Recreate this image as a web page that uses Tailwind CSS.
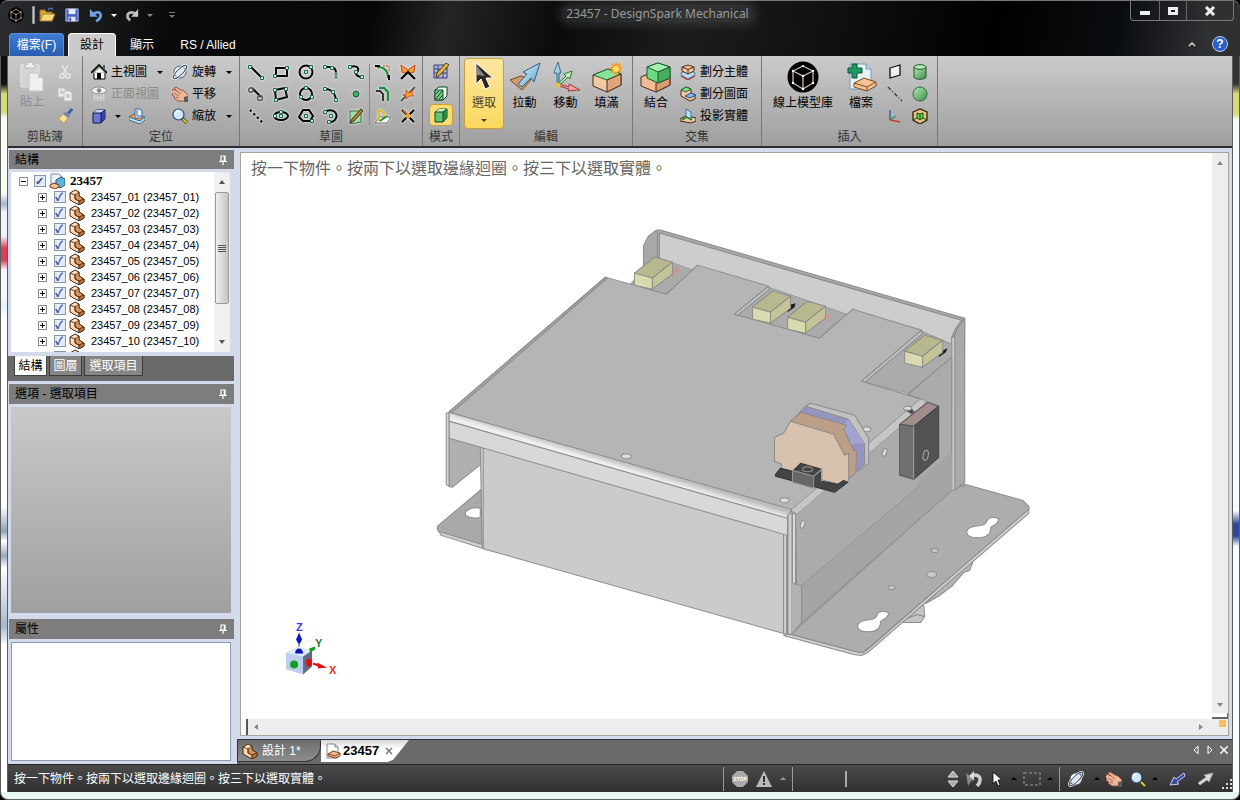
<!DOCTYPE html>
<html lang="zh-Hant">
<head>
    <meta charset="UTF-8">
    <meta name="viewport" content="width=device-width, initial-scale=1.0">
    <title>23457 - DesignSpark Mechanical</title>
    <script src="https://cdn.jsdelivr.net/npm/@tailwindcss/browser@4"></script>
</head>
<body class="h-screen overflow-hidden bg-black font-['Liberation_Sans','Noto_Sans_CJK_TC',sans-serif] text-xs leading-4 text-black">

    <!-- Icon library -->
    <svg class="absolute size-0">
        <defs>
            <linearGradient id="gGreen" x2="1" y2="1"><stop stop-color="#b5e8b5"/><stop offset="1" stop-color="#3c8f4c"/></linearGradient>
            <linearGradient id="gBlue" x2="1" y2="1"><stop stop-color="#e8f6ff"/><stop offset="1" stop-color="#4f9fc8"/></linearGradient>
            <linearGradient id="gBend" gradientUnits="userSpaceOnUse" x1="620" y1="457" x2="617" y2="467"><stop stop-color="#b4b4b4"/><stop offset=".4" stop-color="#c0c0c0"/><stop offset="1" stop-color="#efefef"/></linearGradient>
        </defs>
        <symbol id="i-logo" viewBox="0 0 32 32">
            <circle cx="16" cy="16" r="15.500" fill="#000"/>
            <path d="M16 5l10 5v12l-10 6-10-6V10zM6 10l10 5 10-5M16 15v13" fill="none" stroke="#d8c4b8" stroke-width="1.200"/>
            <g fill="#fff"><circle cx="16" cy="5" r="1"/><circle cx="26" cy="10" r="1.200"/><circle cx="6" cy="10" r="1.200"/><circle cx="16" cy="15" r="1.200"/><circle cx="26" cy="22" r="1.200"/><circle cx="6" cy="22" r="1.200"/><circle cx="16" cy="28" r="1.200"/></g>
        </symbol>
        <symbol id="i-open" viewBox="0 0 16 16">
            <path d="M1 14V3h5l1 2h6v3" fill="#d9a93a" stroke="#8f6a1c"/><path d="M1 14l3-7h12l-3 7z" fill="#f6d77c" stroke="#a87d25"/><path d="M9 3c2-3 4-2 5 0" fill="none" stroke="#4779b0" stroke-width="1.400"/>
        </symbol>
        <symbol id="i-save" viewBox="0 0 16 16">
            <path d="M1 1h14v14H1z" fill="#4a63c8" stroke="#c0c8f0"/><path d="M4 1h8v6H4z" fill="#e8ecff"/><path d="M4 10h8v5H4z" fill="#dfe4f8"/><path d="M5 11h2v4H5z" fill="#3348a8"/>
        </symbol>
        <symbol id="i-undo" viewBox="0 0 16 16">
            <path d="M8 15c7-3 7-11 1-10-2 0-3 1-5 3" fill="none" stroke="#6ea4e4" stroke-width="3"/><path d="M1 1v9h9z" fill="#6ea4e4"/>
        </symbol>
        <symbol id="i-redo" viewBox="0 0 16 16">
            <path d="M6 14C1 11 2 5 8 5c2 0 3 1 4 2" fill="none" stroke="#b8b8b8" stroke-width="3"/><path d="M15 1v9H7z" fill="#c8c8c8"/>
        </symbol>
        <symbol id="i-paste" viewBox="0 0 26 32">
            <path d="M2 4h18v22H2z" fill="#d4d4d4" stroke="#e6e6e6"/><path d="M6 7V4h2a3 3 0 0 1 6 0h2v3z" fill="#f0f0f0" stroke="#bbb"/><path d="M10 12h9l5 5v13H10z" fill="#f0f0f0" stroke="#c4c4c4"/><path d="M19 12v5h5" fill="#c8c8c8"/>
        </symbol>
        <symbol id="i-cut" viewBox="0 0 16 16">
            <path d="M5 1l5 9M11 1L6 10" stroke="#e6e6e6" stroke-width="1.500"/><g fill="none" stroke="#e6e6e6" stroke-width="1.500"><circle cx="5" cy="12" r="2.200"/><circle cx="11" cy="12" r="2.200"/></g>
        </symbol>
        <symbol id="i-copy" viewBox="0 0 16 16">
            <g fill="#efefef" stroke="#bdbdbd"><path d="M1 2h6l2 2v7H1z"/><path d="M7 5h6l2 2v8H7z"/></g><path d="M9 9h4M9 11h4M3 5h3M3 7h3" stroke="#aaa"/>
        </symbol>
        <symbol id="i-brush" viewBox="0 0 16 16">
            <path d="M11 6l4-5" stroke="#4a5fae" stroke-width="3"/><path d="M8 4l5 4-2 2-5-4z" fill="#7383c0"/><path d="M6 6l5 4-4 5-6-5c2 0 4-2 5-4z" fill="#f8e29a" stroke="#c0a450"/>
        </symbol>
        <symbol id="i-home" viewBox="0 0 16 16">
            <path d="M3 8v7h11V8" fill="#fff" stroke="#000"/><path d="M0 9l8-8 8 8" fill="#7fa07f" stroke="#000" stroke-width="1.600"/><path d="M3.500 8.500L8.500 4l5 4.500z" fill="#fff"/><path d="M6 9h4v6H6z"/><path d="M12 1v4l2 2V1z" fill="#557"/>
        </symbol>
        <symbol id="i-front" viewBox="0 0 16 16">
            <path d="M2 7h12v8H2zM2 10h12M2 13h12M5 7v8M8 7v8M11 7v8" fill="#e6e6e6" stroke="#b4b4b4"/><ellipse cx="8" cy="4.500" rx="7.500" ry="3.500" fill="#f0f0f0" stroke="#888"/><circle cx="8" cy="4.500" r="2.200" fill="#888"/>
        </symbol>
        <symbol id="i-cube" viewBox="0 0 16 16">
            <path d="M2 5l4-3h8v9l-4 4H2z" fill="#6c78d8" stroke="#101848"/><path d="M2 5l4-3h8l-4 3z" fill="#cdd6ff"/><path d="M10 5l4-3v9l-4 4z" fill="#3a44a0"/><path d="M2 5h8l4-3M10 5v10" fill="none" stroke="#101848"/>
        </symbol>
        <symbol id="i-plan" viewBox="0 0 16 16">
            <path d="M0 9l5-3 11 3-5 5z" fill="#eda35c" stroke="#8a5a30"/><path d="M0 9v3l11 4 5-4V9l-5 4z" fill="#bfe4f8" stroke="#3d6c8a"/><path d="M6 1h5l2 2v7H6z" fill="#e9f2ff" stroke="#3468a8"/><path d="M8 2v6h5" fill="none" stroke="#3468a8"/>
        </symbol>
        <symbol id="i-spin" viewBox="0 0 16 16">
            <circle cx="8" cy="8" r="6" fill="#dde4ea" stroke="#4c5a68"/><path d="M4 7a4 4 0 0 1 4-3" stroke="#fff" stroke-width="2" fill="none"/><ellipse cx="8" cy="8" rx="9" ry="2.800" transform="rotate(-45 8 8)" fill="none" stroke="#fff" stroke-width="2.400"/><ellipse cx="8" cy="8" rx="9" ry="2.800" transform="rotate(-45 8 8)" fill="none" stroke="#2d4266"/>
        </symbol>
        <symbol id="i-hand" viewBox="0 0 16 16">
            <path d="M0 5l1-2 4 2-3-3 2-1 5 3 3 1 4 4v6l-4 0-6 0-4-3 1-1-3-2 1-1-2-2z" fill="#eeb698" stroke="#8d5440" stroke-width=".9"/><path d="M5 5l4 3M2 7l5 3M4 11l3 1" stroke="#9d6450" stroke-width=".9"/><path d="M12 11l4-1v6h-4z" fill="#5c5c5c"/>
        </symbol>
        <symbol id="i-zoom" viewBox="0 0 16 16">
            <path d="M10 10l5 5" stroke="#3c3c20" stroke-width="3.500"/><path d="M11 11l4 4" stroke="#d9c936" stroke-width="2"/><circle cx="6.500" cy="6.500" r="5.500" fill="#cfe6fb" stroke="#34466a" stroke-width="1.200"/><path d="M3.500 6a3 3 0 0 1 3-3" stroke="#fff" stroke-width="1.500" fill="none"/>
        </symbol>

        <!-- Sketch tools -->
        <symbol id="i-node" viewBox="0 0 4 4"><path d="M.5.5h3v3h-3z" fill="#cfeedd" stroke="#17684a"/></symbol>
        <symbol id="k-line" viewBox="0 0 16 16"><path d="M3 3l10 10" stroke="#000" stroke-width="2"/><use href="#i-node" width="4" height="4" x="0" y="1"/><use href="#i-node" width="4" height="4" x="12" y="12"/></symbol>
        <symbol id="k-rect" viewBox="0 0 16 16"><path d="M3 4h11v8H3z" fill="none" stroke="#000" stroke-width="2"/><use href="#i-node" width="4" height="4" x="0" y="10"/><use href="#i-node" width="4" height="4" x="12" y="2"/></symbol>
        <symbol id="k-circle" viewBox="0 0 16 16"><circle cx="8" cy="8" r="6.500" fill="none" stroke="#000" stroke-width="2"/><use href="#i-node" width="4" height="4" x="6" y="6"/><use href="#i-node" width="4" height="4" x="11" y="1"/></symbol>
        <symbol id="k-arc" viewBox="0 0 16 16"><path d="M2 3h5c5 0 6 3 6 6" fill="none" stroke="#000" stroke-width="2"/><path d="M13 8v7" stroke="#6b8f7c" stroke-width="3"/><use href="#i-node" width="4" height="4" x="0" y="1"/><use href="#i-node" width="4" height="4" x="7" y="2"/></symbol>
        <symbol id="k-spline" viewBox="0 0 16 16"><path d="M2 3c9-3 9 3 7 5s0 5 5 5" fill="none" stroke="#000" stroke-width="2"/><use href="#i-node" width="4" height="4" x="0" y="1"/><use href="#i-node" width="4" height="4" x="6" y="6"/><use href="#i-node" width="4" height="4" x="12" y="11"/></symbol>
        <symbol id="k-tan" viewBox="0 0 16 16"><path d="M4 2l9 9" stroke="#000" stroke-width="2"/><g fill="none" stroke="#555" stroke-width="1.500"><circle cx="3" cy="4" r="2.200"/><circle cx="12" cy="12" r="2.500"/></g></symbol>
        <symbol id="k-rect3" viewBox="0 0 16 16"><path d="M2 4l10-2 2 9-11 3z" fill="none" stroke="#000" stroke-width="2"/><use href="#i-node" width="4" height="4" x="0" y="2"/><use href="#i-node" width="4" height="4" x="11" y="1"/><use href="#i-node" width="4" height="4" x="1" y="12"/></symbol>
        <symbol id="k-circle3" viewBox="0 0 16 16"><circle cx="8" cy="8" r="6" fill="none" stroke="#000" stroke-width="2"/><use href="#i-node" width="4" height="4" x="6" y="0"/><use href="#i-node" width="4" height="4" x="1" y="9"/><use href="#i-node" width="4" height="4" x="12" y="9"/></symbol>
        <symbol id="k-arc3" viewBox="0 0 16 16"><path d="M2 3c6 0 10 4 11 10" fill="none" stroke="#000" stroke-width="2"/><use href="#i-node" width="4" height="4" x="0" y="1"/><use href="#i-node" width="4" height="4" x="8" y="4"/><use href="#i-node" width="4" height="4" x="11" y="12"/></symbol>
        <symbol id="k-point" viewBox="0 0 16 16"><circle cx="8" cy="8" r="3" fill="#3fae6a" stroke="#14532d"/></symbol>
        <symbol id="k-dots" viewBox="0 0 16 16"><path d="M2 2l13 13" stroke="#000" stroke-width="2.200" stroke-dasharray="2 3"/></symbol>
        <symbol id="k-ellipse" viewBox="0 0 16 16"><ellipse cx="8" cy="8" rx="7" ry="4" fill="none" stroke="#000" stroke-width="2"/><use href="#i-node" width="4" height="4" x="0" y="6"/><use href="#i-node" width="4" height="4" x="6" y="6"/><use href="#i-node" width="4" height="4" x="6" y="2"/></symbol>
        <symbol id="k-poly" viewBox="0 0 16 16"><path d="M5 2h6l4 6-3 5H5L1 9z" fill="none" stroke="#000" stroke-width="2"/><use href="#i-node" width="4" height="4" x="6" y="6"/><use href="#i-node" width="4" height="4" x="12" y="11"/></symbol>
        <symbol id="k-sweep" viewBox="0 0 16 16"><path d="M3 3c8-3 12 3 10 7-1 3-4 4-6 4" fill="none" stroke="#000" stroke-width="2"/><use href="#i-node" width="4" height="4" x="0" y="2"/><use href="#i-node" width="4" height="4" x="6" y="6"/><use href="#i-node" width="4" height="4" x="4" y="12"/></symbol>
        <symbol id="k-edit" viewBox="0 0 16 16"><path d="M2 3h11v11l-11 2z" fill="#a7dba7" stroke="#2e7038"/><path d="M2 15l2-4 9-10 2 2-9 10z" fill="#b08a3a" stroke="#3d2c0c"/></symbol>
        <symbol id="k-fillet" viewBox="0 0 16 16"><path d="M2 3c8 0 11 4 11 11" fill="none" stroke="#1d8f3c" stroke-width="2.200"/><path d="M0 2h5M14 11v5" stroke="#000" stroke-width="2"/><path d="M8 2h6v5" fill="none" stroke="#c84b2c" stroke-dasharray="2 1"/></symbol>
        <symbol id="k-offset" viewBox="0 0 16 16"><path d="M4 2h5l4 4v9" fill="none" stroke="#1d8f3c" stroke-width="2.400"/><path d="M1 5h4l3 3v7" fill="none" stroke="#000" stroke-width="1.500"/></symbol>
        <symbol id="k-project" viewBox="0 0 16 16"><path d="M0 15l5-6h11l-4 6z" fill="#fff" stroke="#666"/><path d="M4 1v12M4 2l5 3v6" fill="none" stroke="#e0bb2c" stroke-width="2"/><path d="M5 13l7-5" stroke="#1d8f3c" stroke-width="2"/></symbol>
        <symbol id="k-trim" viewBox="0 0 16 16"><path d="M1 1l7 5 7-5-1 7-6 2-6-2z" fill="#f4a22e" stroke="#c33d1e"/><path d="M1 15l7-7 7 7" fill="none" stroke="#000" stroke-width="2.200"/></symbol>
        <symbol id="k-split" viewBox="0 0 16 16"><path d="M1 15L15 1" stroke="#555" stroke-width="2"/><path d="M3 9l3-1 0-4 3 3 4-3-1 4 2 2-4 0-4 3 0-3z" fill="#f4a22e" stroke="#c33d1e" stroke-width=".8"/></symbol>
        <symbol id="k-cross" viewBox="0 0 16 16"><path d="M2 2l12 12M14 2L2 14" stroke="#000" stroke-width="1.800"/><circle cx="8" cy="8" r="2.500" fill="#f4a22e"/><path d="M3 2l4 4" stroke="#c8651e" stroke-width="2"/></symbol>

        <!-- Mode -->
        <symbol id="m-sketch" viewBox="0 0 16 16"><path d="M1 2h13v13H1zM1 6h13M1 10h13M5 2v13M10 2v13" fill="#b4b8d8" stroke="#3a3f80"/><path d="M3 14l1-4 9-10 3 2-9 10z" fill="#e6b93c" stroke="#5a4210"/></symbol>
        <symbol id="m-section" viewBox="0 0 16 16"><path d="M2 5l4-3h8v9l-4 4H2z" fill="#f3fff3" stroke="#0e4420"/><path d="M2 5h8v10H2z" fill="#7ed08c" stroke="#0e4420"/><path d="M3 14l6-8M3 9l3-3M6 14l4-4" stroke="#0e4420"/></symbol>
        <symbol id="m-solid" viewBox="0 0 16 16"><path d="M2 5l4-3h8v9l-4 4H2z" fill="#62c574" stroke="#0e4420"/><path d="M2 5l4-3h8l-4 3z" fill="#c6f5c6"/><path d="M10 5l4-3v9l-4 4z" fill="#2f8a44"/><path d="M2 5h8l4-3M10 5v10" fill="none" stroke="#0e4420"/></symbol>

        <!-- Edit -->
        <symbol id="e-select" viewBox="0 0 32 32"><path d="M8 2v21l5-5 4 10 5-2-4-9h7z" fill="#2e2420" stroke="#fff"/><path d="M9 5v9l8 1z" fill="#8a8584"/></symbol>
        <symbol id="e-pull" viewBox="0 0 32 32"><path d="M1 19l11-4 10 4-9 10z" fill="#d59a6c" stroke="#7a4a28"/><path d="M31 2L14 11l4 2-9 10 4 3 9-9 3 4z" fill="url(#gBlue)" stroke="#2f5f80"/></symbol>
        <symbol id="e-move" viewBox="0 0 32 32"><path d="M7 23V12H4L8 1l3 11H9v11z" fill="url(#gBlue)" stroke="#2f6f90"/><path d="M9 22l7-7-2-2 8-3-2 8-2-2-7 7z" fill="#bdeabd" stroke="#2b7a3a"/><path d="M9 23l10 3v-3l11 6-12 1 1-2-10-3z" fill="#f0a6a6" stroke="#a03838"/><circle cx="8" cy="24" r="2.500" fill="#e3c43a"/></symbol>
        <symbol id="e-fill" viewBox="0 0 32 32"><path d="M2 14l15-6 13 5v11l-14 7-14-6z" fill="#f3c8a4" stroke="#4a2c16"/><path d="M2 14l15-6 13 5-14 6z" fill="#8de09a" stroke="#1f6a30"/><path d="M16 19v12l14-7V13z" fill="#e0a57c" stroke="#4a2c16"/><path d="M25 0l1.500 4L30 2l-1 4h3l-3 3 2 3-4-1-2 4-2-4-4 1 2-3-3-3h4l-2-4 4 2z" fill="#f59a1c"/><circle cx="25" cy="8" r="3" fill="#ffe067"/></symbol>
        <symbol id="e-combine" viewBox="0 0 32 32"><path d="M1 16l7-3 22 5v6l-14 7-15-6z" fill="#f0bd94" stroke="#4a2c16"/><path d="M16 22l14-5v7l-14 7z" fill="#d89c70" stroke="#4a2c16"/><path d="M7 6l11-4 12 4v11l-12 5-11-5z" fill="#6ed884" stroke="#1a5a2a"/><path d="M7 6l11-4 12 4-12 5z" fill="#a6f0b2" stroke="#1a5a2a"/><path d="M18 11v11l12-5V6z" fill="#46b060" stroke="#1a5a2a"/></symbol>
        <symbol id="e-splitbody" viewBox="0 0 16 16"><path d="M1 12l7-3 7 3-7 4z" fill="#ef7a6a" stroke="#90281c"/><path d="M1 9l7-3 7 3v2l-7 4-7-4z" fill="#b8d8f4" stroke="#4a6a8a" stroke-width=".8"/><path d="M2 3l6-2 6 2v4l-6 3-6-3z" fill="#f3c8a4" stroke="#4a2c16"/><path d="M2 3l6 2.500L14 3M8 5.500V10" fill="none" stroke="#4a2c16"/></symbol>
        <symbol id="e-splitface" viewBox="0 0 16 16"><path d="M1 4l5-3 5 2v4l4 2v4l-5 2-9-5z" fill="#f3c8a4" stroke="#4a2c16"/><path d="M1 4l5-3 5 2-5 3z" fill="#7fdc8c" stroke="#1f6a30"/><path d="M5 10l5 2 6-3-5-2z" fill="#7fb6ee" stroke="#2c4e88"/></symbol>
        <symbol id="e-project" viewBox="0 0 16 16"><path d="M0 11l6-3 10 2v3l-5 2-11-2z" fill="#f3c8a4" stroke="#3a2414"/><path d="M6 1l5 3v8l-5-3z" fill="#bfe0fa" stroke="#3a70a8"/><path d="M2 12l5-3 5 3" fill="none" stroke="#1f8a3a" stroke-width="1.500"/></symbol>

        <!-- Insert -->
        <symbol id="n-file" viewBox="0 0 32 32"><path d="M5 3h16l5 5v20H5z" fill="#e9f1f8" stroke="#7a98b4"/><path d="M21 3v5h5" fill="#b8cee0" stroke="#7a98b4"/><path d="M7 3v4H3v5h4v5h5v-5h5V7h-5V3z" fill="#1f9a64" stroke="#0c5438"/><path d="M9 22l10-5 12 4v4l-9 5-13-4z" fill="#f3c393" stroke="#7a4a22"/><path d="M9 22l13 4 9-5M22 26v4" fill="none" stroke="#7a4a22"/></symbol>
        <symbol id="n-plane" viewBox="0 0 16 16"><path d="M3 4l10-3v10L3 14z" fill="#f0f0f0" stroke="#111" stroke-width="1.300"/></symbol>
        <symbol id="n-axis" viewBox="0 0 16 16"><path d="M1 1l14 14" stroke="#444" stroke-width="1.500" stroke-dasharray="4 2 1 2"/></symbol>
        <symbol id="n-origin" viewBox="0 0 16 16"><path d="M3 2v10" stroke="#2a6aa8" stroke-width="1.500"/><path d="M3 12l6-4" stroke="#2e9a4c" stroke-width="1.500"/><path d="M3 12l10 2" stroke="#c23a3a" stroke-width="1.500"/></symbol>
        <symbol id="n-cyl" viewBox="0 0 16 16"><path d="M2 3v10c0 3 12 3 12 0V3z" fill="url(#gGreen)" stroke="#1f5a2c"/><ellipse cx="8" cy="3" rx="6" ry="2.300" fill="#b8e8b8" stroke="#1f5a2c"/></symbol>
        <symbol id="n-ball" viewBox="0 0 16 16"><circle cx="8" cy="8" r="7" fill="url(#gGreen)" stroke="#2c6a3a"/></symbol>
        <symbol id="n-shell" viewBox="0 0 16 16"><path d="M1 4l7-3 7 3v8l-7 4-7-4z" fill="#e6c088" stroke="#2f220c" stroke-width="1.300"/><path d="M5 5l3 1 3-1v5l-3 2-3-2z" fill="#5fd04a" stroke="#1d5a14"/><path d="M8 6v6M1 12l4-2M15 12l-4-2" fill="none" stroke="#1d5a14"/></symbol>

        <!-- Document and part -->
        <symbol id="t-part" viewBox="0 0 16 16"><path d="M1 4l5-3 4 2v4l5 3v3l-5 3-9-5z" fill="#fbd9b4" stroke="#4a2a12"/><path d="M6 6l4-3v4l5 3-5 2-4-2z" fill="#d59660" stroke="#4a2a12" stroke-width=".8"/><path d="M1 4l5 2v4l4 2v4" fill="none" stroke="#4a2a12" stroke-width=".8"/><path d="M10 12l5-2v3l-5 3z" fill="#b87840" stroke="#4a2a12" stroke-width=".8"/></symbol>
        <symbol id="t-asm" viewBox="0 0 16 16"><path d="M2 1h8l3 3v10H2z" fill="#eef3f8" stroke="#6f8fa8"/><path d="M7 7l5-3 4 2v6l-5 3-4-2z" fill="#5fb4dc" stroke="#1f5a7a"/><path d="M1 12l4-2 5 2v2l-4 2-5-2z" fill="#f0bd94" stroke="#6a3c1c"/></symbol>
        <symbol id="t-doc" viewBox="0 0 16 16"><path d="M2 1h8l3 3v11H2z" fill="#fff" stroke="#888"/><path d="M10 1v3h3" fill="#ddd" stroke="#888"/><path d="M3 11l5-3 7 2v3l-5 2-7-2z" fill="#f3b98a" stroke="#7a4a22"/><path d="M3 11l7 2 5-3" fill="none" stroke="#7a4a22"/></symbol>
        <symbol id="t-pin" viewBox="0 0 10 10"><path d="M3 1h4v5H3zM1 6.500h8M5 6v4" fill="none" stroke="#fff" stroke-width="1.200"/><path d="M6.500 1v5" stroke="#fff" stroke-width="1.500"/></symbol>
    </svg>

    <div class="flex h-full flex-col">

        <!-- Title bar and ribbon tabs -->
        <header class="flex h-14 flex-col rounded-t-lg border-t border-[#777] bg-[linear-gradient(100deg,#2b2d30_0%,#08090a_14%,#060707_30%,#222426_36%,#0a0b0c_45%,#1a1c1d_55%,#101213_65%,#000_80%,#0a0d10_90%,#2e3032_97%)]">
            <div class="flex h-[31px] items-start">
                <div class="flex h-7 w-[185px] items-center gap-2 pl-2">
                    <svg class="size-4"><use href="#i-logo"/></svg>
                    <span class="h-[18px] w-[3px] border border-[#888] bg-[#ccc]"></span>
                    <button class="-ml-1" aria-label="開啟"><svg class="size-4"><use href="#i-open"/></svg></button>
                    <button class="ml-0.5" aria-label="儲存"><svg class="size-3.5"><use href="#i-save"/></svg></button>
                    <button class="ml-0.5" aria-label="復原"><svg class="size-3.5"><use href="#i-undo"/></svg></button>
                    <span class="border-x-[3px] border-t-[3px] border-x-transparent border-t-white"></span>
                    <button aria-label="重做"><svg class="size-3.5"><use href="#i-redo"/></svg></button>
                    <span class="border-x-[3px] border-t-[3px] border-x-transparent border-t-[#888]"></span>
                    <span class="ml-2 flex flex-col items-center gap-0.5"><i class="h-px w-1.5 bg-[#777]"></i><i class="border-x-[3px] border-t-[3px] border-x-transparent border-t-[#777]"></i></span>
                </div>
                <h1 class="flex-1 pt-1 text-center font-['Noto_Sans','Noto_Sans_CJK_TC',sans-serif] text-xs leading-[18px] text-[#9a9a9a]"><span class="rounded-lg bg-white/10 px-1 shadow-[0_0_8px_4px_rgba(255,255,255,0.1)]">23457 - DesignSpark Mechanical</span></h1>
                <div class="mr-1.5 flex h-5 rounded-b border border-t-0 border-[#77797b] text-white">
                    <button class="flex w-[29px] items-center justify-center border-r border-[#66686a]" aria-label="最小化"><span class="mt-1 h-1 w-2.5 bg-[#eee]"></span></button>
                    <button class="flex w-[27px] items-center justify-center border-r border-[#66686a]" aria-label="最大化"><span class="h-2 w-2.5 border-[3px] border-[#eee]"></span></button>
                    <button class="flex w-[46px] items-center justify-center" aria-label="關閉"><svg class="h-2.5 w-3" viewBox="0 0 12 10"><path d="M2 1l8 8M10 1L2 9" stroke="#eee" stroke-width="3"/></svg></button>
                </div>
            </div>
            <nav class="flex h-6 items-end pl-[9px] text-white">
                <button class="h-[23px] w-[55px] rounded-t-sm border border-b-0 border-[#5f8fe0] bg-linear-to-b from-[#3f7bd4] to-[#2a5db0]">檔案(F)</button>
                <button class="ml-1 h-[23px] w-12 rounded-t-sm border border-b-0 border-white bg-[#cbcbcb] text-black">設計</button>
                <button class="h-[23px] w-13">顯示</button>
                <button class="h-[23px] w-20">RS / Allied</button>
                <div class="ml-auto flex h-6 items-center gap-4 pr-3">
                    <svg class="h-1.5 w-2" viewBox="0 0 8 6"><path d="M1 5l3-3 3 3" fill="none" stroke="#ddd" stroke-width="1.500"/></svg>
                    <button class="size-4 rounded-full border border-[#b8c8e8] bg-[#2a5fc8] text-xs leading-3 font-bold text-white" aria-label="說明">?</button>
                </div>
            </nav>
        </header>

        <div class="flex min-h-0 flex-1">
            <div class="w-2 border-x border-[#5c5c5c] bg-[linear-gradient(#111_0_28px,#d6dc7a_38px_56px,#f8fcf0_62px_138px,#a8b4cc_148px,#eef6fc_156px_180px,#d8405c_192px_204px,#f4f8fc_214px_240px,#e4f6fc_252px,#fff_262px_450px,#8fa4bc_475px,#fff_485px,#9aa8c0_500px,#fff_512px,#a8b8d0_570px,#fff_590px)]"></div>

            <div class="flex min-w-0 flex-1 flex-col">

                <!-- Ribbon -->
                <section class="flex h-[92px] border-b-2 border-[#2c2c2c] bg-linear-to-b from-[#cbcbcb] to-[#9f9f9f] whitespace-nowrap [&_button]:flex [&_button]:items-center">
                    <div class="flex w-[75px] flex-col border-r border-[#777]">
                        <div class="flex flex-1 gap-2 pl-2 pt-1">
                            <button class="w-8 flex-col text-[#8c8c8c]"><svg class="h-[34px] w-[26px]"><use href="#i-paste"/></svg>貼上</button>
                            <div class="flex flex-col gap-[6px] pl-px pt-1">
                                <button aria-label="剪下"><svg class="size-4"><use href="#i-cut"/></svg></button>
                                <button aria-label="複製"><svg class="size-4"><use href="#i-copy"/></svg></button>
                                <button aria-label="複製格式"><svg class="size-4"><use href="#i-brush"/></svg></button>
                            </div>
                        </div>
                        <div class="h-[17px] text-center text-[#333]">剪貼簿</div>
                    </div>

                    <div class="flex w-[157px] flex-col border-r border-[#777]">
                        <div class="flex flex-1 gap-2 pl-2 pt-2">
                            <div class="flex w-[73px] flex-col gap-[6px]">
                                <button class="gap-1"><svg class="size-4 shrink-0"><use href="#i-home"/></svg>主視圖<span class="ml-1.5 border-x-[3px] border-t-[3px] border-x-transparent border-t-black"></span></button>
                                <button class="gap-1 text-[#8a8a8a]"><svg class="size-4 shrink-0"><use href="#i-front"/></svg>正面視圖</button>
                                <div class="flex items-center gap-2">
                                    <button class="gap-2" aria-label="視圖"><svg class="size-4"><use href="#i-cube"/></svg><span class="border-x-[3px] border-t-[3px] border-x-transparent border-t-black"></span></button>
                                    <button aria-label="平面視圖"><svg class="size-4"><use href="#i-plan"/></svg></button>
                                </div>
                            </div>
                            <div class="flex flex-col gap-[6px]">
                                <button class="gap-1"><svg class="size-4"><use href="#i-spin"/></svg>旋轉<span class="ml-1.5 border-x-[3px] border-t-[3px] border-x-transparent border-t-black"></span></button>
                                <button class="gap-1"><svg class="size-4"><use href="#i-hand"/></svg>平移</button>
                                <button class="gap-1"><svg class="size-4"><use href="#i-zoom"/></svg>縮放<span class="ml-1.5 border-x-[3px] border-t-[3px] border-x-transparent border-t-black"></span></button>
                            </div>
                        </div>
                        <div class="h-[17px] text-center text-[#333]">定位</div>
                    </div>

                    <div class="flex w-[183px] flex-col border-r border-[#777]">
                        <div class="flex flex-1 gap-[5px] pl-2 pt-2 [&_button]:drop-shadow-[0_0_1px_#fff]">
                            <div class="grid grid-cols-5 content-start gap-x-[9px] gap-y-[6px]" id="sketchTools"></div>
                            <div class="mb-1 w-px bg-[#888]"></div>
                            <div class="grid grid-cols-2 content-start gap-x-[9px] gap-y-[6px]" id="curveTools"></div>
                        </div>
                        <div class="h-[17px] text-center text-[#333]">草圖</div>
                    </div>

                    <div class="flex w-[37px] flex-col border-r border-[#777]">
                        <div class="flex flex-1 flex-col items-center pt-1">
                            <button class="h-[22px] w-6 justify-center" aria-label="草圖模式"><svg class="size-4"><use href="#m-sketch"/></svg></button>
                            <button class="h-[22px] w-6 justify-center" aria-label="剖面模式"><svg class="size-4"><use href="#m-section"/></svg></button>
                            <button class="h-[22px] w-6 justify-center rounded-sm border border-[#c9a03c] bg-[#fbdc74]" aria-label="3D 模式"><svg class="size-4"><use href="#m-solid"/></svg></button>
                        </div>
                        <div class="h-[17px] text-center text-[#333]">模式</div>
                    </div>

                    <div class="flex w-[173px] flex-col border-r border-[#777]">
                        <div class="flex flex-1 pl-1 pt-0.5">
                            <button class="h-[71px] w-10 flex-col rounded-sm border border-[#c9a03c] bg-linear-to-b from-[#fbe6a0] to-[#fbd95c] pt-0.5 text-[#4a4330]"><svg class="mb-0.5 size-8"><use href="#e-select"/></svg>選取<span class="mt-2 border-x-[3px] border-t-[3px] border-x-transparent border-t-[#4a4330]"></span></button>
                            <button class="h-[71px] w-[41px] flex-col pt-[3px]"><svg class="mb-0.5 size-8"><use href="#e-pull"/></svg>拉動</button>
                            <button class="h-[71px] w-[41px] flex-col pt-[3px]"><svg class="mb-0.5 size-8"><use href="#e-move"/></svg>移動</button>
                            <button class="h-[71px] w-[41px] flex-col pt-[3px]"><svg class="mb-0.5 size-8"><use href="#e-fill"/></svg>填滿</button>
                        </div>
                        <div class="h-[17px] text-center text-[#333]">編輯</div>
                    </div>

                    <div class="flex w-[129px] flex-col border-r border-[#777]">
                        <div class="flex flex-1 gap-1 pl-[3px] pt-0.5">
                            <button class="h-[71px] w-10 flex-col pt-[3px]"><svg class="mb-0.5 size-8"><use href="#e-combine"/></svg>結合</button>
                            <div class="flex flex-col gap-[6px] pt-1.5">
                                <button class="gap-1"><svg class="size-4"><use href="#e-splitbody"/></svg>劃分主體</button>
                                <button class="gap-1"><svg class="size-4"><use href="#e-splitface"/></svg>劃分圖面</button>
                                <button class="gap-1"><svg class="size-4"><use href="#e-project"/></svg>投影實體</button>
                            </div>
                        </div>
                        <div class="h-[17px] text-center text-[#333]">交集</div>
                    </div>

                    <div class="flex w-[176px] flex-col border-r border-[#777]">
                        <div class="flex flex-1 pl-[7px] pt-0.5">
                            <button class="h-[71px] w-[68px] flex-col pt-[3px]"><svg class="mb-0.5 size-8"><use href="#i-logo"/></svg>線上模型庫</button>
                            <button class="ml-1 h-[71px] w-10 flex-col pt-[3px]"><svg class="mb-0.5 size-8"><use href="#n-file"/></svg>檔案</button>
                            <div class="grid grid-cols-2 content-start gap-x-[9px] gap-y-[6px] pl-1.5 pt-1.5">
                                <button aria-label="平面"><svg class="size-4"><use href="#n-plane"/></svg></button>
                                <button aria-label="圓柱"><svg class="size-4"><use href="#n-cyl"/></svg></button>
                                <button aria-label="軸"><svg class="size-4"><use href="#n-axis"/></svg></button>
                                <button aria-label="球"><svg class="size-4"><use href="#n-ball"/></svg></button>
                                <button aria-label="原點"><svg class="size-4"><use href="#n-origin"/></svg></button>
                                <button aria-label="薄殼"><svg class="size-4"><use href="#n-shell"/></svg></button>
                            </div>
                        </div>
                        <div class="h-[17px] text-center text-[#333]">插入</div>
                    </div>
                </section>

                <!-- Work area -->
                <div class="flex min-h-0 flex-1 bg-[#d4daec]">

                    <!-- Docked panels -->
                    <aside class="flex w-[226px] flex-col pl-px pt-0.5">
                        <div class="flex h-[19px] items-center justify-between bg-[#7d7d7d] px-1.5"><span>結構</span><svg class="size-2.5"><use href="#t-pin"/></svg></div>
                        <div class="ml-0.5 mr-1 mt-[3px] flex h-[180px] bg-white">
                            <div class="min-w-0 flex-1 overflow-hidden pl-2 pt-px" id="tree"></div>
                            <div class="flex w-4 flex-col items-center bg-[#f0f0f0] py-2">
                                <span class="border-x-[3px] border-b-[4px] border-x-transparent border-b-[#555]"></span>
                                <span class="mt-2 flex h-28 w-3.5 flex-col items-center justify-center gap-px rounded-xs border border-[#999] bg-linear-to-r from-[#f0f0f0] to-[#c4c4c8]"><i class="h-px w-2 bg-[#555]"></i><i class="h-px w-2 bg-[#555]"></i><i class="h-px w-2 bg-[#555]"></i><i class="h-px w-2 bg-[#555]"></i></span>
                                <span class="mt-auto border-x-[3px] border-t-[4px] border-x-transparent border-t-[#555]"></span>
                            </div>
                        </div>
                        <div class="-ml-px mt-1 flex h-[25px] items-start gap-0.5 bg-[#6a6a6a] pl-1.5 text-white">
                            <button class="h-5 w-[33px] border border-t-0 border-[#444] bg-white text-black">結構</button>
                            <button class="h-5 w-[33px] border border-t-0 border-[#3c3c3c] bg-[#868686]">圖層</button>
                            <button class="h-5 w-[59px] border border-t-0 border-[#3c3c3c] bg-[#868686]">選取項目</button>
                        </div>

                        <div class="mt-[3px] flex h-5 items-center justify-between bg-[#7d7d7d] px-1.5"><span>選項 - 選取項目</span><svg class="size-2.5"><use href="#t-pin"/></svg></div>
                        <div class="ml-0.5 mr-[3px] mt-[3px] mb-1.5 h-[206px] bg-linear-to-b from-[#c9c9c9] to-[#a0a0a0]"></div>

                        <div class="flex h-5 items-center justify-between bg-[#7d7d7d] px-1.5"><span>屬性</span><svg class="size-2.5"><use href="#t-pin"/></svg></div>
                        <div class="ml-0.5 mr-[3px] mt-[3px] mb-[3px] flex-1 border border-[#8c9cb0] bg-white"></div>
                    </aside>

                    <!-- Document -->
                    <main class="ml-[3px] flex min-w-0 flex-1 flex-col pt-1">
                        <div class="mx-[3px] mb-[3px] flex min-h-0 flex-1 flex-col border border-[#a5a59a] bg-[#ededed]">
                            <div class="flex min-h-0 flex-1">
                                <div class="relative min-w-0 flex-1 bg-white">
                                    <p class="absolute left-2.5 top-1 text-base leading-6 text-[#666]">按一下物件。按兩下以選取邊緣迴圈。按三下以選取實體。</p>
                                    <svg class="h-full w-full" viewBox="241 153 970 565" preserveAspectRatio="xMinYMin meet" stroke="#8c8c8c" stroke-width="1" stroke-linejoin="round">
                                        <!-- DIN clip under the plate -->
                                        <path d="M972 562l-3 8-6 2-12 14-12 9-14 8 40-40z" fill="#b5b5b5"/>
                                        <path d="M923 604l1 12-4 6-20 0 12-12z" fill="#c4c4c4"/><path d="M924 616l-8-2-12 5" fill="none"/>
                                        <!-- Mounting plate, right -->
                                        <path d="M787 633l68 18 7 1 5-3 161-141v5L867 652l-6 3-8-1-70-19z" fill="#cfcfcf"/>
                                        <path d="M787 633l164-143 13-6 58 16 6 6v3L867 648l-5 4-7-1z" fill="#adadad"/>
                                        <g fill="#fff">
                                            <path d="M966 532c0-5 8-7 15-7 4-1 5-3 6-6 2-3 10-2 11 0-1 4-4 6-7 7-2 1-1 4-2 6-3 7-23 7-23 0z"/>
                                            <path d="M857 626c0-5 8-7 14-7 4-1 5-3 6-6 2-3 10-2 11 0-1 4-4 6-7 7-2 1-1 4-2 6-3 7-22 7-22 0z"/>
                                        </g>
                                        <g fill="#c8c8c8"><ellipse cx="934" cy="550" rx="3.500" ry="2"/><ellipse cx="931" cy="574" rx="5" ry="3"/><ellipse cx="891" cy="587" rx="3.500" ry="2"/></g>
                                        <!-- Mounting foot, left -->
                                        <path d="M437 528l4 7 42 13v-5z" fill="#d0d0d0"/>
                                        <path d="M481 489l-44 37 1 5 44 13z" fill="#a9a9a9"/>
                                        <path d="M480 508c-8-2-15 2-15 5s6 6 15 4z" fill="#fff"/>
                                        <!-- Back panel -->
                                        <path d="M643 272v-26l5-10 8-6 4 0 304 88-1 168H700z" fill="#a8a8a8"/>
                                        <path d="M659 233l302 87-6 8-4 9v60H659z" fill="#cdcdcd"/>
                                        <path d="M657 231v28" fill="none"/>
                                        <path d="M964 318v164l-11 8V337l4-9z" fill="#a9a9a9"/>
                                        <path d="M951 337h3v153h-3z" fill="#cfcfcf"/>
                                        <!-- Recess floors -->
                                        <g fill="#ababab" stroke="#999">
                                            <path d="M630 284l26-27 37 13-27 24z"/><path d="M734 314l34-27 78 27-27 24z"/><path d="M861 381l60-50 30 13v60z"/>
                                        </g>
                                        <!-- Right wall -->
                                        <path d="M951 357l-44 37 17 6-133 112v121l160-143z" fill="#ababab"/>
                                        <path d="M801 585l116-98 4-10 30-25v38L801 622z" fill="#a5a5a5" stroke="none"/>
                                        <path d="M801 621v-36l116-98 4-10M801 622l150-132" fill="none" stroke="#999"/>
                                        <!-- Cover -->
                                        <path d="M605 277l61 17 31-29 71 21-34 28 85 24 33-29 69 21-60 51 63 19-133 112-342-100z" fill="#b5b5b5"/>
                                        <path d="M605 277l-156 134 3 1 155-134z" fill="#a4a4a4"/>
                                        <path d="M768 286l-34 28 3 1 32-26zM921 330l-60 51 3 1 57-48z" fill="#c4c4c4"/>
                                        <path d="M919 399l5 1 1 5-131 111-5-5z" fill="#c6c6c6" stroke="#a0a0a0"/>
                                        <!-- Front -->
                                        <path d="M446 413l3-1v74l-3-2z" fill="#d4d4d4"/>
                                        <path d="M449 436l33 10v18l-4 2-26 21-3-1z" fill="#b0b0b0"/>
                                        <path d="M480 445l303 88v100l-301-85z" fill="#cbcbcb"/><path d="M483 447v101" fill="none"/>
                                        <path d="M783 530l8-17v121l-8-1z" fill="#cfcfcf"/><path d="M786 534v99" fill="none"/>
                                        <path d="M449 412l342 97-4 9-338-97z" fill="url(#gBend)"/>
                                        <path d="M449 421l338 97v17l-338-97z" fill="#d8d8d8"/>
                                        <path d="M787 515l4-4 4 2 1 71 5 1v37l-10 12h-4z" fill="#b2b2b2"/><path d="M788 514h3v119h-3z" fill="#cfcfcf" stroke="#aaa"/>
                                        <path d="M792 513l3 1v70l-3-2z" fill="#dedede"/>
                                        <g fill="#dcdcdc"><ellipse cx="626" cy="456" rx="5" ry="2.500"/><ellipse cx="784" cy="500" rx="4.500" ry="2.500"/><ellipse cx="866" cy="429" rx="4" ry="2.500"/><ellipse cx="802" cy="524" rx="2" ry="4" transform="rotate(20 802 524)"/><ellipse cx="884" cy="452" rx="2" ry="4" transform="rotate(20 884 452)"/></g>
                                        <!-- Connectors -->
                                        <g stroke="none"><path d="M668 271l8-4 4 3-8 8z" fill="#c49a98"/><path d="M822 317l8-4-2 5-7 4z" fill="#d09a9a"/><path d="M787 305l8-2-1 4-7 5zM938 352l9-4-2 4-7 5z" fill="#1c1c1c"/></g>
                                        <g id="connectors"></g>
                                        <!-- Terminal block -->
                                        <path d="M805 406l5-3 44 12 14 23v25l-10 8-40-40z" fill="#c2c2c2"/>
                                        <path d="M798 413l7-7 43 13 16 25v20l-8 7z" fill="#9494bf"/><path d="M848 419l-8 8 10 20 4-4 10 1z" fill="#a3a3cf" stroke="none"/>
                                        <path d="M790 421l10-9 46 13-3 4 10 21 3 1-1 22-8 6z" fill="#bd9e86"/>
                                        <path d="M774 437l9-4 7-12 43 13 11 21 4-2v27l-6 5-61-16v-5l-7-3z" fill="#d8c2ae"/>
                                        <path d="M775 474l5-6 12 3 8-8 21 6v12l16 3 6-4 4 2-13 10-59-16z" fill="#444" stroke="#333"/>
                                        <path d="M792 470l21 6v12l-21-6z" fill="#666" stroke="#999"/><path d="M813 476l8-7v12" fill="none" stroke="#aaa"/><ellipse cx="807" cy="469" rx="5" ry="2.500" fill="none" stroke="#999"/>
                                        <!-- Relay -->
                                        <path d="M903 409l6-3 5 6-3 2z" fill="#444"/><ellipse cx="907" cy="408" rx="4" ry="2" fill="#ddd"/>
                                        <path d="M899 424l28-22 11 4-25 20z" fill="#a38d8d" stroke="#555"/>
                                        <path d="M899 424l14 2v53l-14-4z" fill="#707070" stroke="#555"/>
                                        <path d="M913 426l25-20v51l-25 22z" fill="#525252" stroke="#444"/><path d="M913 426v53" stroke="#aaa"/>
                                        <ellipse cx="925" cy="455" rx="2.500" ry="5" fill="none" stroke="#aaa" transform="rotate(12 925 455)"/>
                                        <!-- Axis triad -->
                                        <g stroke="none">
                                            <path d="M286 652l11-6 15 4-9 6z" fill="#dce8fa"/><path d="M286 652l17 4v18l-17-5z" fill="#bccfee"/><path d="M303 656l9-6v16l-9 8z" fill="#626a80"/>
                                            <path d="M295 653a4 5 0 0 1 8 0z" fill="#0a10c0"/><circle cx="294" cy="664" r="4" fill="#10a020"/><ellipse cx="309" cy="662" rx="3" ry="4" fill="#e01010"/>
                                            <path d="M299 632l3 7-2 4h-2l-2-4z" fill="#1018c8"/><path d="M299 637v9" stroke="#1018c8"/>
                                            <path d="M309 648l6-2 0 3-5 3z" fill="#10a020"/><path d="M317 662l10 5-9 1z" fill="#e01010"/><path d="M313 663l8 3" stroke="#e01010" stroke-width="2"/>
                                        </g>
                                        <g stroke="none" class="text-[11px] font-bold"><text x="296" y="631" fill="#3a38e0">Z</text><text x="315" y="647" fill="#208030">Y</text><text x="329" y="673" fill="#f03028">X</text></g>
                                    </svg>
                                </div>
                                <div class="flex w-4 flex-col items-center pt-2">
                                    <span class="border-x-[3px] border-b-[4px] border-x-transparent border-b-[#888]"></span>
                                    <span class="mt-auto border-x-[3px] border-t-[4px] border-x-transparent border-t-[#888]"></span>
                                    <span class="mt-1.5 h-1.5 w-full border-r border-b-2 border-[#666] bg-white"></span>
                                </div>
                            </div>
                            <div class="flex h-4 items-center">
                                <span class="h-4 w-[7px] border-r-2 border-[#555] bg-[#f8f8f8]"></span>
                                <span class="ml-1.5 border-y-[3px] border-r-[4px] border-y-transparent border-r-[#888]"></span>
                                <span class="ml-auto mr-1 border-y-[3px] border-l-[4px] border-y-transparent border-l-[#888]"></span>
                                <span class="mb-2 ml-3 mr-0.5 size-[7px] bg-[#fbbc62]"></span>
                            </div>
                        </div>
                        <div class="flex h-[25px] items-start border-t border-[#333] bg-[#6a6a6a]">
                            <button class="flex h-[22px] w-[84px] items-center gap-1 rounded-br-2xl border border-t-0 border-[#333] bg-linear-to-b from-[#6e6e6e] to-[#8c8c8c] pl-1 text-white"><svg class="size-4"><use href="#t-part"/></svg>設計 1*</button>
                            <button class="flex h-[22px] w-[88px] items-center gap-0.5 bg-linear-to-b from-[#d8d8d8] to-white to-40% pl-1 text-[13px] font-bold [clip-path:polygon(0_0,100%_0,82%_90%,76%_100%,0_100%)]"><svg class="size-4"><use href="#t-doc"/></svg>23457<svg class="ml-1 size-2" viewBox="0 0 8 8"><path d="M1 1l6 6M7 1L1 7" stroke="#777" stroke-width="1.500"/></svg></button>
                            <div class="ml-auto flex h-5 items-center gap-1.5 pr-1">
                                <svg class="size-2" viewBox="0 0 8 8"><path d="M6 0v8L2 4z" fill="none" stroke="#fff"/></svg>
                                <svg class="size-2" viewBox="0 0 8 8"><path d="M2 0v8l4-4z" fill="none" stroke="#fff"/></svg>
                                <svg class="size-2" viewBox="0 0 8 8"><path d="M0 0l8 8M8 0L0 8" stroke="#fff" stroke-width="1.500"/></svg>
                            </div>
                        </div>
                    </main>
                </div>

                <!-- Status bar -->
                <footer class="flex h-7 items-center border-t border-[#222] bg-linear-to-b from-[#4a4a4a] to-[#303030] pl-1.5 text-white">
                    <span class="flex-1">按一下物件。按兩下以選取邊緣迴圈。按三下以選取實體。</span>
                    <div class="flex h-6 w-[69px] items-center gap-2 border-l border-[#999] pl-2">
                        <svg class="size-4" viewBox="0 0 16 16"><path d="M5 0h6l5 5v6l-5 5H5l-5-5V5z" fill="#aaa"/><text x="8" y="10" text-anchor="middle" font-size="5" font-weight="bold" fill="#fff">STOP</text></svg>
                        <svg class="size-4" viewBox="0 0 16 16"><path d="M8 0l8 16H0z" fill="#bbb"/><path d="M8 5v6M8 12v2" stroke="#333" stroke-width="2"/></svg>
                        <span class="border-x-[3px] border-b-[3px] border-x-transparent border-b-[#999]"></span>
                    </div>
                    <div class="flex h-6 w-[155px] items-center border-l border-[#999]"><span class="ml-[52px] h-4 w-0.5 bg-[#aaa]"></span></div>
                    <div class="flex h-6 items-center gap-1.5">
                        <svg class="h-[18px] w-3" viewBox="0 0 12 18"><path d="M6 1l5 6H1zM6 17l5-6H1z" fill="#aaa" stroke="#ddd"/></svg>
                        <svg class="h-4 w-[18px]" viewBox="0 0 18 16"><path d="M1 2l9 7-4 1-3 5z" fill="#888"/><path d="M8 4c8-1 9 6 4 11" fill="none" stroke="#ccc" stroke-width="3.500"/><path d="M9 0v9L4 5z" fill="#ddd"/></svg>
                        <svg class="size-4" viewBox="0 0 16 16"><path d="M4 1v12l3-3 2 5 2-1-2-5h4z" fill="#fff" stroke="#000" stroke-width=".8"/></svg>
                        <span class="border-x-[3px] border-b-[3px] border-x-transparent border-b-black"></span>
                        <svg class="h-3.5 w-[18px]" viewBox="0 0 18 14"><path d="M1 1h16v12H1z" fill="none" stroke="#7c7c7c" stroke-width="1.500" stroke-dasharray="3 2"/></svg>
                        <span class="border-x-[3px] border-b-[3px] border-x-transparent border-b-black"></span>
                        <span class="h-6 w-px bg-[#999]"></span>
                        <svg class="ml-0.5 size-4"><use href="#i-spin"/></svg>
                        <span class="ml-1 border-x-[3px] border-b-[3px] border-x-transparent border-b-black"></span>
                        <svg class="size-4"><use href="#i-hand"/></svg>
                        <svg class="ml-0.5 size-4"><use href="#i-zoom"/></svg>
                        <span class="border-x-[3px] border-b-[3px] border-x-transparent border-b-black"></span>
                        <svg class="ml-1 h-3.5 w-[18px]" viewBox="0 0 18 14"><path d="M16 1l-8 6-2-2-4 8 9-1-2-2 8-6z" fill="#3c4c94" stroke="#c8d0f4"/></svg>
                        <svg class="ml-1 h-3.5 w-[18px]" viewBox="0 0 18 14"><path d="M2 11l8-6-2-2 9-2-4 9-2-2-7 5z" fill="#ddd" stroke="#999"/></svg>
                        <svg class="mt-2.5 size-3" viewBox="0 0 12 12"><path d="M10 2h2M6 6h6M2 10h10" stroke="#ddd" stroke-width="2" stroke-dasharray="2 2"/></svg>
                    </div>
                </footer>
            </div>

            <div class="w-2 border-x border-[#5c5c5c] bg-[linear-gradient(#333_0_28px,#d6dc7a_38px_58px,#f4fcf8_64px_455px,#2c4a9c_468px_480px,#f4fcfc_490px)]"></div>
        </div>

        <div class="h-2 rounded-b-lg border border-t-0 border-[#5c6464] bg-[#e8f6f4]"></div>
    </div>

    <script>
        const sketch = ['line', 'rect', 'circle', 'arc', 'spline', 'tan', 'rect3', 'circle3', 'arc3', 'point', 'dots', 'ellipse', 'poly', 'sweep', 'edit'];
        const curve = ['fillet', 'trim', 'offset', 'split', 'project', 'cross'];

        const toolButton = name => `<button aria-label="${name}"><svg class="size-4"><use href="#k-${name}"/></svg></button>`;
        document.getElementById('sketchTools').innerHTML = sketch.map(toolButton).join('');
        document.getElementById('curveTools').innerHTML = curve.map(toolButton).join('');

        // Structure tree
        const box = "size-3 shrink-0 appearance-none border border-[#8a94a4] bg-[#e4ecf8] text-[11px] leading-[10px] font-bold text-[#2c4a98] checked:before:content-['✓']";
        const expander = 'flex size-[9px] shrink-0 items-center justify-center border border-[#8c8c8c] bg-white';
        let rows = `<div class="flex h-4 items-center gap-[6px]">
            <button class="${expander}" aria-label="collapse"><i class="h-px w-[5px] bg-black"></i></button>
            <label class="flex items-center gap-[3px] font-['Liberation_Serif',serif] text-[13px] font-bold"><input type="checkbox" checked class="${box}"><svg class="size-4"><use href="#t-asm"/></svg><span class="pl-0.5">23457</span></label>
        </div>`;
        // the eleventh row only peeks out above the lower edge
        for (let i = 1; i <= 11; i++) {
            const id = '23457_' + String(i).padStart(2, '0');
            const name = i < 11 ? `${id} (${id})` : '';
            rows += `<div class="flex h-4 items-center gap-[7px] pl-[19px] text-[11px] whitespace-nowrap">
                <button class="${expander}" aria-label="expand"><svg class="size-[5px]" viewBox="0 0 5 5"><path d="M0 2.500h5M2.500 0v5" stroke="#000"/></svg></button>
                <label class="flex items-center gap-[3px]"><input type="checkbox" checked class="${box}" aria-label="${id}"><svg class="size-4"><use href="#t-part"/></svg><span class="pl-[3px]">${name}</span></label>
            </div>`;
        }
        document.getElementById('tree').innerHTML = rows;

        // Connector blocks along the back edge
        document.getElementById('connectors').innerHTML = [[634, 273], [752, 307], [787, 317], [904, 351]].map(([x, y]) =>
            `<g transform="translate(${x} ${y})"><path d="M0 0l20-16 18 5-20 16z" fill="#b8b88e"/><path d="M0 0l18 5v11l-18-4z" fill="#dadab0"/><path d="M18 5l20-16v12l-20 15z" fill="#c4c498"/></g>`
        ).join('');
    </script>
</body>
</html>
